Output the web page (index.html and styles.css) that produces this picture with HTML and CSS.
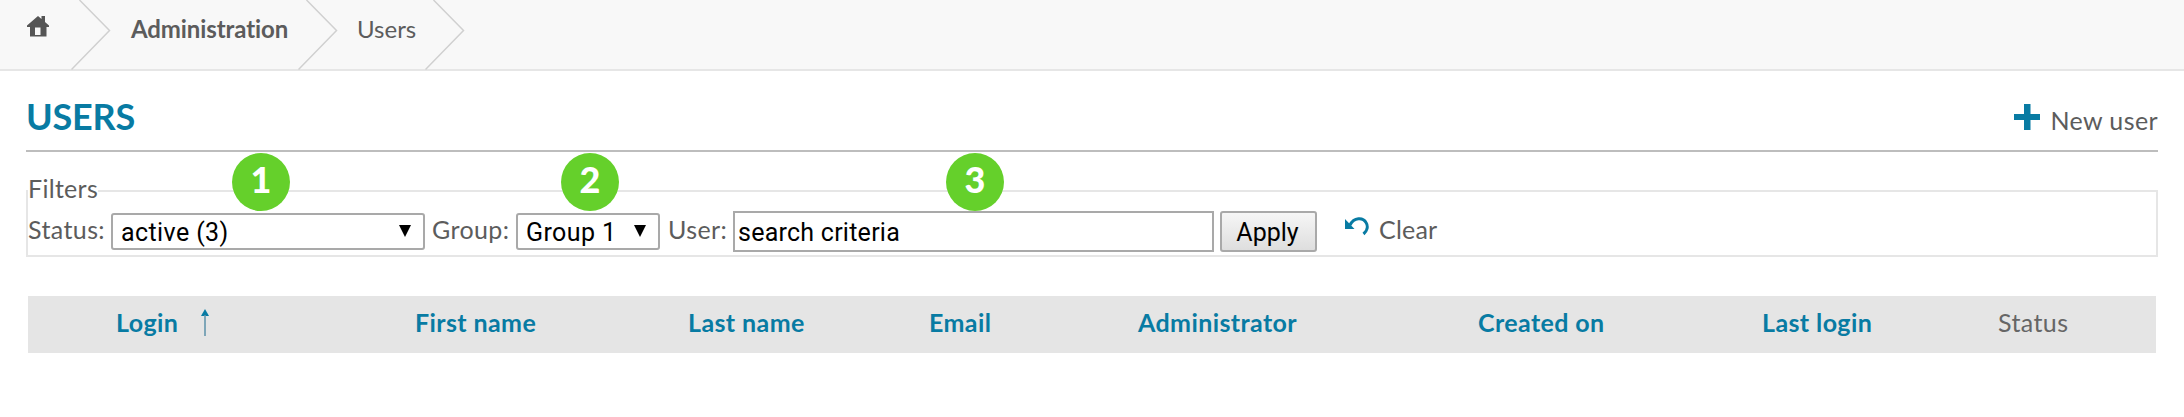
FILE: index.html
```html
<!DOCTYPE html>
<html lang="en">
<head>
<meta charset="utf-8">
<title>Users</title>
<link rel="stylesheet" href="styles.css">
</head>
<body>
<nav class="breadcrumb">
  <a class="crumb crumb-home"><svg width="22" height="21" viewBox="0 0 22 21"><path fill="#555" fill-rule="evenodd" d="M0 9.500 11 0l3.500 3V0H18v6l4 3.500V11h-2.500v9.500H3V11H0zM8 11.500V19h5.500v-7.500z"/></svg></a>
  <svg class="chevron" width="40" height="70" viewBox="0 0 40 70"><path d="M8.500 0 38.500 30.500.5 69.500"/></svg>
  <a class="crumb crumb-admin">Administration</a>
  <svg class="chevron" width="40" height="70" viewBox="0 0 40 70"><path d="M8.500 0 38.500 30.500.5 69.500"/></svg>
  <a class="crumb crumb-users">Users</a>
  <svg class="chevron" width="40" height="70" viewBox="0 0 40 70"><path d="M8.500 0 38.500 30.500.5 69.500"/></svg>
</nav>
<main class="page">
  <header class="title-row">
    <h1 class="title">USERS</h1>
    <a class="new-user"><svg width="26" height="26" viewBox="0 0 26 26"><path fill="#087ba3" d="M10 0h6.500v10H26v6h-9.500v10H10V16H0v-6h10z"/></svg><span>New user</span></a>
  </header>
  <section class="filters">
    <span class="legend">Filters</span>
    <div class="controls">
      <span class="label l-status">Status:</span>
      <div class="select s-status"><span>active (3)</span><svg width="12" height="12" viewBox="0 0 12 12"><path d="M0 0h12L6 12z"/></svg><b class="badge b1">1</b></div>
      <span class="label l-group">Group:</span>
      <div class="select s-group"><span>Group 1</span><svg width="12" height="12" viewBox="0 0 12 12"><path d="M0 0h12L6 12z"/></svg><b class="badge b2">2</b></div>
      <span class="label l-user">User:</span>
      <div class="input"><span>search criteria</span><b class="badge b3">3</b></div>
      <div class="apply"><span>Apply</span></div>
      <svg class="undo" width="25" height="22" viewBox="0 0 25 22"><path fill="none" stroke="#087ba3" stroke-width="3" d="M5 8C9 0 18 0 21 5.500c2.500 4 1 8.500-2.500 11.500"/><path fill="#087ba3" d="M0 2v10h9.500z"/></svg>
      <span class="label l-clear">Clear</span>
    </div>
  </section>
  <div class="thead">
    <span class="th c-login">Login</span>
    <svg class="sort" width="8" height="27" viewBox="0 0 8 27"><path fill="#087ba3" d="M0 7 4 0l4 7z"/><path fill="#6496ad" d="M3.200 6h1.600v21H3.200z"/></svg>
    <span class="th c-first">First name</span>
    <span class="th c-last">Last name</span>
    <span class="th c-email">Email</span>
    <span class="th c-admin">Administrator</span>
    <span class="th c-created">Created on</span>
    <span class="th c-seen">Last login</span>
    <span class="th c-status">Status</span>
  </div>
</main>
</body>
</html>
```
FILE: styles.css
```css
* { box-sizing: border-box; }
body { margin: 0; background: #fff; color: #5c5c5c; font: 25px/30px Lato, sans-serif; white-space: nowrap; }
svg { display: block; flex: none; }
.breadcrumb { display: flex; height: 71px; background: #f8f8f8; border-bottom: 2px solid #e6e6e6; }
.crumb { flex: none; padding-top: 14px; }
.crumb-home { width: 71px; padding: 16px 0 0 27px; }
.crumb-admin { width: 187px; padding-left: 20px; font-size: 24px; font-weight: 700; letter-spacing: -.1px; }
.crumb-users { width: 87px; padding-left: 19px; font-size: 24px; }
.chevron path { fill: none; stroke: #d0d0d0; stroke-width: 1.500; }
.page { padding: 0 26px; }
.title-row { display: flex; justify-content: space-between; height: 81px; border-bottom: 2px solid #bdbdbd; }
.title { margin: 0; padding: 24px 0 0; color: #087ba3; font-size: 36px; line-height: 42px; font-weight: 700; letter-spacing: -.2px; }
.new-user { display: flex; gap: 10px; padding-top: 33px; letter-spacing: .4px; }
.new-user span { padding-top: 1px; }
.filters { height: 67px; margin-top: 38px; border: 2px solid #e6e6e6; }
.legend { display: block; width: 70px; height: 30px; margin-top: -19px; background: #fff; letter-spacing: .3px; }
.controls { display: flex; height: 41px; margin-top: 8px; }
.label { flex: none; padding-top: 3px; letter-spacing: .4px; }
.l-status { width: 83px; }
.l-group { width: 91px; padding-left: 7px; }
.l-user { width: 73px; padding-left: 8px; }
.l-clear { padding-left: 9px; letter-spacing: .2px; }
.select, .input, .apply { position: relative; flex: none; display: flex; color: #000; font: 25px/30px Roboto, sans-serif; border: 2px solid #a9a9a9; }
.select { height: 37px; margin-top: 2px; padding: 3px 12px 0 8px; border-radius: 3px; justify-content: space-between; letter-spacing: .4px; }
.select svg { margin-top: 7px; }
.s-status { width: 314px; }
.s-group { width: 144px; }
.input { width: 481px; height: 41px; padding: 5px 0 0 3px; letter-spacing: .25px; }
.apply { width: 97px; height: 41px; margin-left: 6px; padding: 5px 2px 0 0; justify-content: center; border-radius: 3px; background: linear-gradient(#f6f6f6, #dedede); }
.undo { margin: 6px 0 0 28px; }
.badge { position: absolute; width: 58px; height: 58px; border-radius: 50%; background: #65d02b; color: #fff; font: 900 36px/52px Lato, sans-serif; letter-spacing: 0; text-align: center; }
.b1 { left: 119px; top: -62px; }
.b2 { left: 43px; top: -62px; }
.b3 { left: 211px; top: -60px; }
.thead { display: flex; height: 57px; margin: 39px 2px 0; padding-top: 11px; background: #e5e5e5; }
.th { flex: none; color: #087ba3; font-weight: 700; letter-spacing: .4px; }
.c-login { width: 173px; padding-left: 88px; }
.sort { margin: 2px 206px 0 0; }
.c-first { width: 273px; }
.c-last { width: 241px; }
.c-email { width: 209px; }
.c-admin { width: 340px; }
.c-created { width: 284px; }
.c-seen { width: 236px; }
.c-status { color: #666; font-weight: 400; letter-spacing: .4px; }
```
